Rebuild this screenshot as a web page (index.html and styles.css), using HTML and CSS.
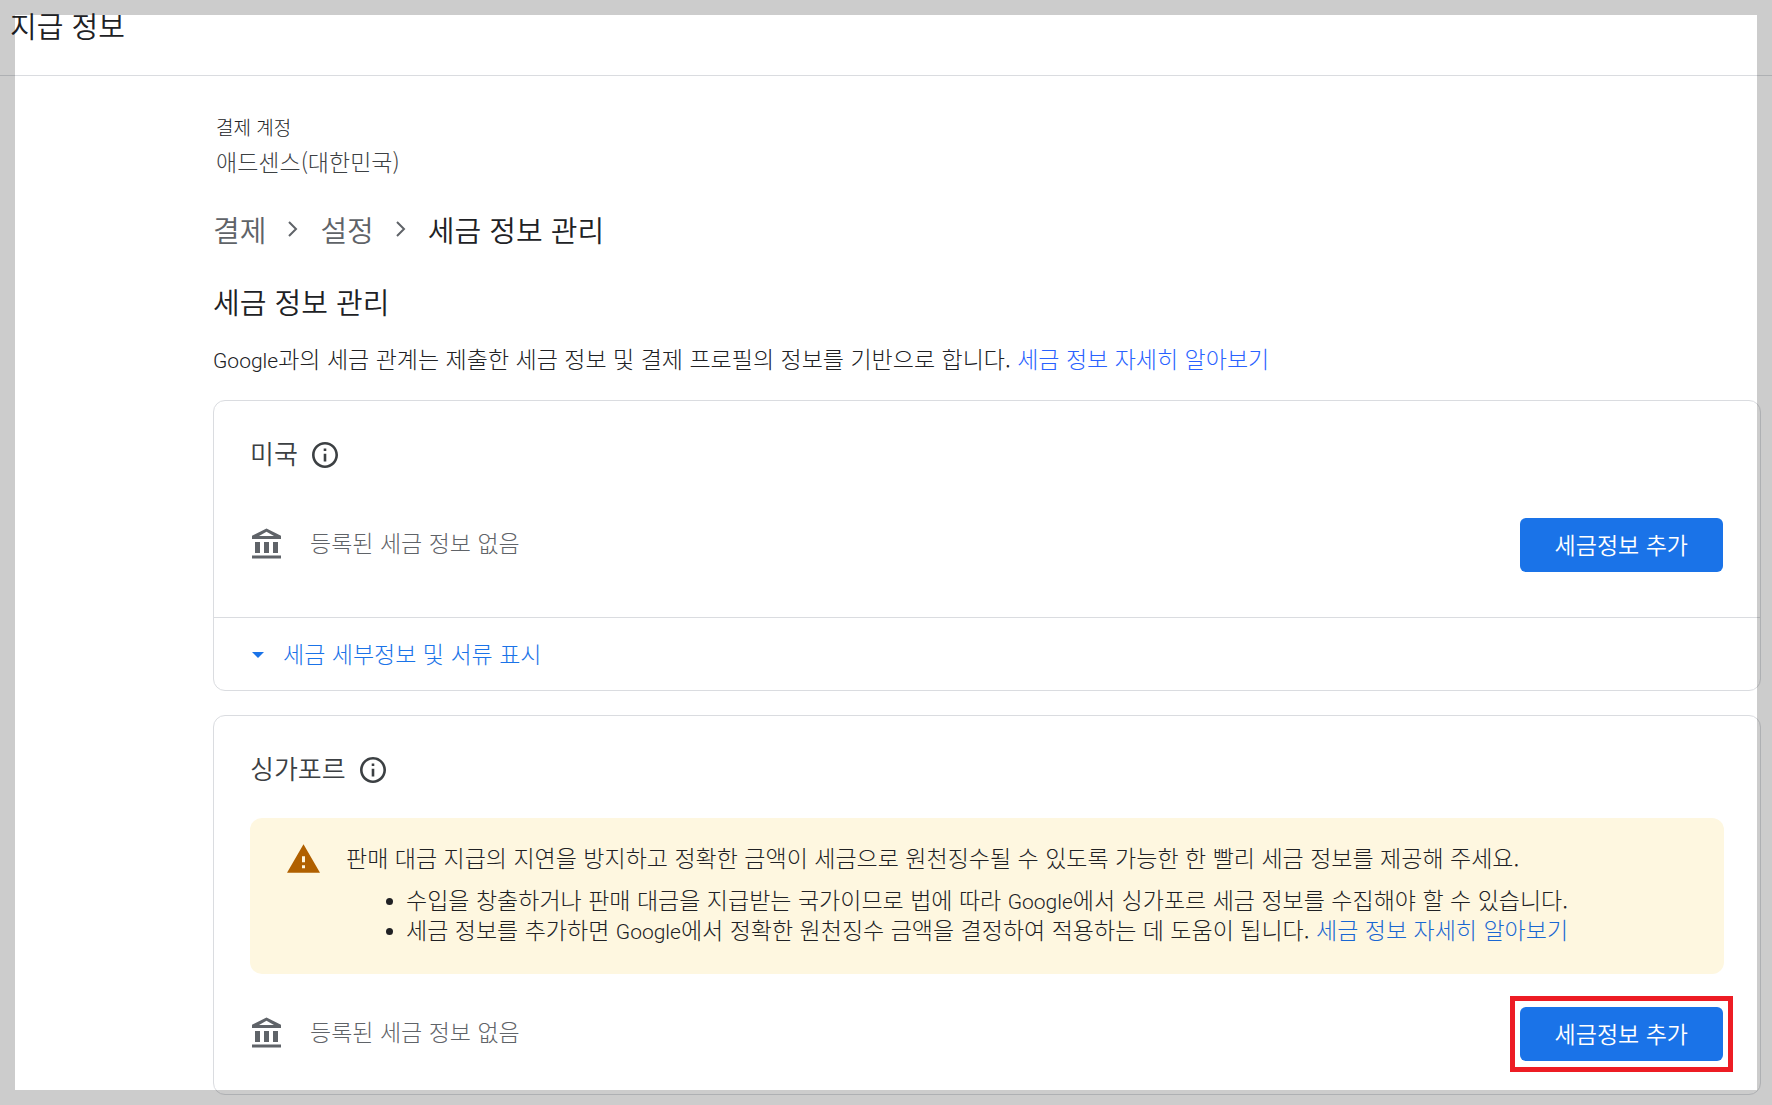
FILE: index.html
```
<!DOCTYPE html>
<html lang="ko">

<head>
    <meta charset="UTF-8">
    <meta name="viewport" content="width=device-width, initial-scale=1.0">
    <title>지급 정보</title>
    <link rel="stylesheet" href="styles.css">
</head>

<body>
    <header class="page-header">
        <h1>지급 정보</h1>
    </header>

    <main class="content">
        <div class="account">
            <div class="account-label">결제 계정</div>
            <div class="account-name">애드센스(대한민국)</div>
        </div>

        <nav class="breadcrumb">
            <a href="#">결제</a>
            <svg class="chevron" viewBox="0 0 10 16"><path d="M1 1l7 7-7 7" /></svg>
            <a href="#">설정</a>
            <svg class="chevron" viewBox="0 0 10 16"><path d="M1 1l7 7-7 7" /></svg>
            <span class="current">세금 정보 관리</span>
        </nav>

        <h2>세금 정보 관리</h2>
        <p class="intro"><span class="latin">Google</span>과의 세금 관계는 제출한 세금 정보 및 결제 프로필의 정보를 기반으로 합니다. <a href="#">세금 정보 자세히 알아보기</a></p>

        <!-- United States -->
        <section class="card">
            <div class="card-title">
                <h3>미국</h3>
                <svg class="info-icon" viewBox="2 2 20 20"><path d="M11 7h2v2h-2zm0 4h2v6h-2zm1-9C6.48 2 2 6.48 2 12s4.48 10 10 10 10-4.48 10-10S17.52 2 12 2zm0 18c-4.41 0-8-3.59-8-8s3.59-8 8-8 8 3.59 8 8-3.59 8-8 8z" /></svg>
            </div>
            <div class="tax-row">
                <svg class="bank-icon" viewBox="0 0 29 31"><path d="M14.5 0.5L0 7.8V11h29V7.8zM14.5 3.8L22 8H7zM3 14h5v11H3zM12 14h5v11h-5zM21 14h5v11h-5zM0 27.5h29v3H0z" fill-rule="evenodd" /></svg>
                <span class="status">등록된 세금 정보 없음</span>
                <button type="button" class="add-button">세금정보 추가</button>
            </div>
            <button type="button" class="toggle">
                <svg class="arrow" viewBox="0 0 12 6"><path d="M0 0h12L6 6z" /></svg>
                <span>세금 세부정보 및 서류 표시</span>
            </button>
        </section>

        <!-- Singapore -->
        <section class="card">
            <div class="card-title">
                <h3>싱가포르</h3>
                <svg class="info-icon" viewBox="2 2 20 20"><path d="M11 7h2v2h-2zm0 4h2v6h-2zm1-9C6.48 2 2 6.48 2 12s4.48 10 10 10 10-4.48 10-10S17.52 2 12 2zm0 18c-4.41 0-8-3.59-8-8s3.59-8 8-8 8 3.59 8 8-3.59 8-8 8z" /></svg>
            </div>
            <div class="alert">
                <svg class="warning-icon" viewBox="1 2 22 19"><path d="M1 21h22L12 2 1 21zm12-3h-2v-2h2v2zm0-4h-2v-4h2v4z" /></svg>
                <div class="alert-text">
                    <p>판매 대금 지급의 지연을 방지하고 정확한 금액이 세금으로 원천징수될 수 있도록 가능한 한 빨리 세금 정보를 제공해 주세요.</p>
                    <ul>
                        <li>수입을 창출하거나 판매 대금을 지급받는 국가이므로 법에 따라 <span class="latin">Google</span>에서 싱가포르 세금 정보를 수집해야 할 수 있습니다.</li>
                        <li>세금 정보를 추가하면 <span class="latin">Google</span>에서 정확한 원천징수 금액을 결정하여 적용하는 데 도움이 됩니다. <a href="#">세금 정보 자세히 알아보기</a></li>
                    </ul>
                </div>
            </div>
            <div class="tax-row">
                <svg class="bank-icon" viewBox="0 0 29 31"><path d="M14.5 0.5L0 7.8V11h29V7.8zM14.5 3.8L22 8H7zM3 14h5v11H3zM12 14h5v11h-5zM21 14h5v11h-5zM0 27.5h29v3H0z" fill-rule="evenodd" /></svg>
                <span class="status">등록된 세금 정보 없음</span>
                <button type="button" class="add-button highlighted">세금정보 추가</button>
            </div>
        </section>
    </main>

    <div class="frame"></div>
</body>

</html>
```
FILE: styles.css
```
* {
    box-sizing: border-box;
}

body {
    margin: 0;
    background-color: #fff;
    color: #202124;
    font-family: "Noto Sans CJK KR", sans-serif;
    font-size: 23px;
    font-weight: 300;
    line-height: 40px;
}

h1,
h2,
h3,
p,
ul {
    margin: 0;
    font-weight: inherit;
}

a {
    color: #1a73e8;
    text-decoration: none;
}

button {
    font: inherit;
    border: none;
    cursor: pointer;
}

svg {
    flex: none;
    fill: currentColor;
}

.latin {
    font-family: Roboto, sans-serif;
    font-size: 21px;
    font-weight: 350;
    line-height: 1;
}

/* translucent border that lies over the whole window */
.frame {
    position: fixed;
    inset: 0;
    border: 15px solid rgba(0, 0, 0, 0.2);
    pointer-events: none;
}

.page-header {
    padding: 5px 10px 30px;
    border-bottom: 1px solid #dadce0;
}

.page-header h1 {
    font-size: 29px;
    font-weight: 350;
}

.content {
    padding: 37px 11px 10px 213px;
}

.account {
    padding-left: 3px;
    color: #3c4043;
}

.account-label {
    font-size: 19px;
    line-height: 28px;
    color: #202124;
}

.breadcrumb {
    display: flex;
    align-items: center;
    gap: 22px;
    margin-top: 28px;
    font-size: 29px;
    font-weight: 350;
}

.breadcrumb a {
    color: #5f6368;
}

.chevron {
    width: 10px;
    height: 16px;
    fill: none;
    stroke: #5f6368;
    stroke-width: 2;
}

h2 {
    margin-top: 32px;
    font-size: 29px;
    font-weight: 350;
}

.intro {
    margin-top: 17px;
}

.intro a {
    color: #2962ff;
}

.card {
    margin-top: 22px;
    border: 1px solid #dadce0;
    border-radius: 12px;
}

.card + .card {
    margin-top: 24px;
}

.card-title {
    display: flex;
    align-items: center;
    gap: 14px;
    padding: 34px 36px 0;
    color: #3c4043;
}

.card-title h3 {
    height: 40px;
    font-size: 26px;
    font-weight: 350;
    line-height: 36px;
}

.info-icon {
    width: 26px;
    height: 26px;
}

.tax-row {
    display: flex;
    align-items: center;
    padding: 43px 37px 45px 36px;
    color: #5f6368;
}

.bank-icon {
    width: 29px;
    height: 31px;
    margin: 0 29px 4px 2px;
}

.status {
    flex: 1;
    padding-bottom: 6px;
}

.add-button {
    position: relative;
    height: 54px;
    padding: 0 35px 2px;
    border-radius: 6px;
    background-color: #1a73e8;
    color: #fff;
    font-weight: 350;
}

.highlighted::after {
    content: "";
    position: absolute;
    inset: -11px -10px;
    border: 5px solid #ed1c24;
}

.toggle {
    display: flex;
    align-items: center;
    gap: 19px;
    width: 100%;
    height: 73px;
    padding: 0 38px 2px;
    border-top: 1px solid #dadce0;
    background: none;
    color: #1a73e8;
}

.arrow {
    width: 12px;
    height: 6px;
    margin-top: 4px;
}

.alert {
    display: flex;
    gap: 26px;
    margin: 28px 36px 0;
    padding: 24px 37px 30px;
    border-radius: 12px;
    background-color: #fef7e0;
    line-height: 30px;
}

.warning-icon {
    width: 33px;
    height: 29px;
    margin-top: 2px;
    color: #b06000;
}

.alert ul {
    margin-top: 12px;
    padding-left: 60px;
    list-style: none;
}

.alert li {
    position: relative;
}

.alert li::before {
    content: "";
    position: absolute;
    top: 14px;
    left: -20px;
    width: 7px;
    height: 7px;
    border-radius: 50%;
    background-color: #202124;
}

.alert a {
    color: #1967d2;
}

.alert + .tax-row {
    padding: 33px 37px 33px 36px;
}
```
